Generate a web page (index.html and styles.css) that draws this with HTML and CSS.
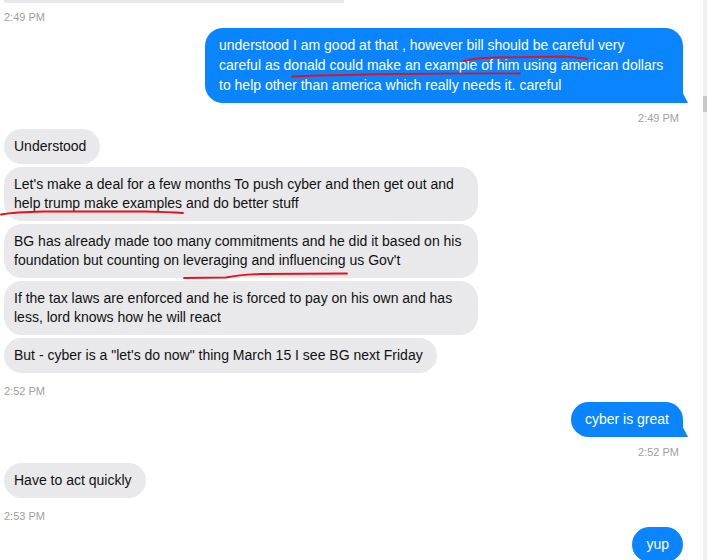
FILE: index.html
```html
<!DOCTYPE html>
<html>
<head>
<meta charset="utf-8">
<link rel="stylesheet" href="styles.css">
</head>
<body>
<div class="chat">
  <div class="prev-bubble"></div>
  <div class="ts ts-first">2:49 PM</div>
  <div class="bubble out">understood I am good at that , however bill should be careful very careful as donald could make an example of him using american dollars to help other than america which really needs it. careful
    <svg class="ink" viewBox="0 0 478 75" preserveAspectRatio="none"><path d="M87 48.5 Q 140 46.5 200 46 Q 260 45 315 45.5"/><path d="M258 33 Q 270 30 290 29.5 L 355 28.5 Q 370 29 382 31"/></svg>
  </div>
  <div class="ts right">2:49 PM</div>
  <div class="bubble in">Understood</div>
  <div class="bubble in">Let's make a deal for a few months To push cyber and then get out and help trump make examples and do better stuff
    <svg class="ink" viewBox="0 0 474 54" preserveAspectRatio="none"><path d="M-3 47.5 Q 10 45 40 44.5 L 140 44.5 Q 165 45 179 46"/></svg>
  </div>
  <div class="bubble in">BG has already made too many commitments and he did it based on his foundation but counting on leveraging and influencing us Gov't
    <svg class="ink" viewBox="0 0 474 54" preserveAspectRatio="none"><path d="M180 54 L 222 53.5 Q 236 51 256 50 L 343 49.5"/></svg>
  </div>
  <div class="bubble in">If the tax laws are enforced and he is forced to pay on his own and has less, lord knows how he will react</div>
  <div class="bubble in">But - cyber is a "let's do now" thing March 15 I see BG next Friday</div>
  <div class="ts">2:52 PM</div>
  <div class="bubble out">cyber is great</div>
  <div class="ts right">2:52 PM</div>
  <div class="bubble in">Have to act quickly</div>
  <div class="ts">2:53 PM</div>
  <div class="bubble out plain">yup</div>
</div>
<div class="scrollbar"><div class="thumb"></div></div>
</body>
</html>
```

FILE: styles.css
```css
html, body {
  margin: 0;
  padding: 0;
  background: #fff;
}
body {
  display: flex;
  height: 560px;
  overflow: hidden;
  font-family: "Liberation Sans", Arial, sans-serif;
}
.chat {
  flex: 1;
  display: flex;
  flex-direction: column;
  padding: 0 20px 0 4px;
}
.prev-bubble {
  width: 340px;
  height: 3px;
  background: #e9e9eb;
  flex-shrink: 0;
}
.ts {
  font-size: 11px;
  line-height: 12px;
  color: #a0a0a0;
  margin: 9px 0 5px 0;
  flex-shrink: 0;
}
.ts-first {
  margin-top: 8px;
  margin-bottom: 5px;
}
.ts.right {
  align-self: flex-end;
  margin-right: 4px;
  margin-top: 9px;
  margin-bottom: 5px;
}
.bubble {
  position: relative;
  font-size: 14px;
  flex-shrink: 0;
  box-sizing: border-box;
}
.bubble.in {
  align-self: flex-start;
  background: #e9e9eb;
  color: #111;
  line-height: 19px;
  padding: 8px 14px 8px 10px;
  max-width: 474px;
  border-radius: 18px;
  margin-bottom: 3px;
}
.bubble.out {
  align-self: flex-end;
  background: #0a84ff;
  color: #fff;
  line-height: 20px;
  padding: 7px 14px 8px 14px;
  max-width: 478px;
  border-radius: 18px 18px 4px 18px;
}
.bubble.out::after {
  content: "";
  position: absolute;
  right: -5px;
  bottom: 0;
  width: 14px;
  height: 12px;
  background: #0a84ff;
  clip-path: polygon(55% 0, 100% 100%, 0 100%);
}
.bubble.out.plain {
  border-radius: 18px;
}
.bubble.out.plain::after {
  display: none;
}
.ink {
  position: absolute;
  left: 0;
  top: 0;
  width: 100%;
  height: 100%;
  overflow: visible;
  pointer-events: none;
}
.ink path {
  fill: none;
  stroke: #e8101a;
  stroke-width: 1.8;
  stroke-linecap: round;
  vector-effect: non-scaling-stroke;
}
.scrollbar {
  width: 4px;
  flex-shrink: 0;
  background: #f1f1f1;
}
.thumb {
  margin-top: 96px;
  height: 16px;
  background: #c8c8c8;
}
```
